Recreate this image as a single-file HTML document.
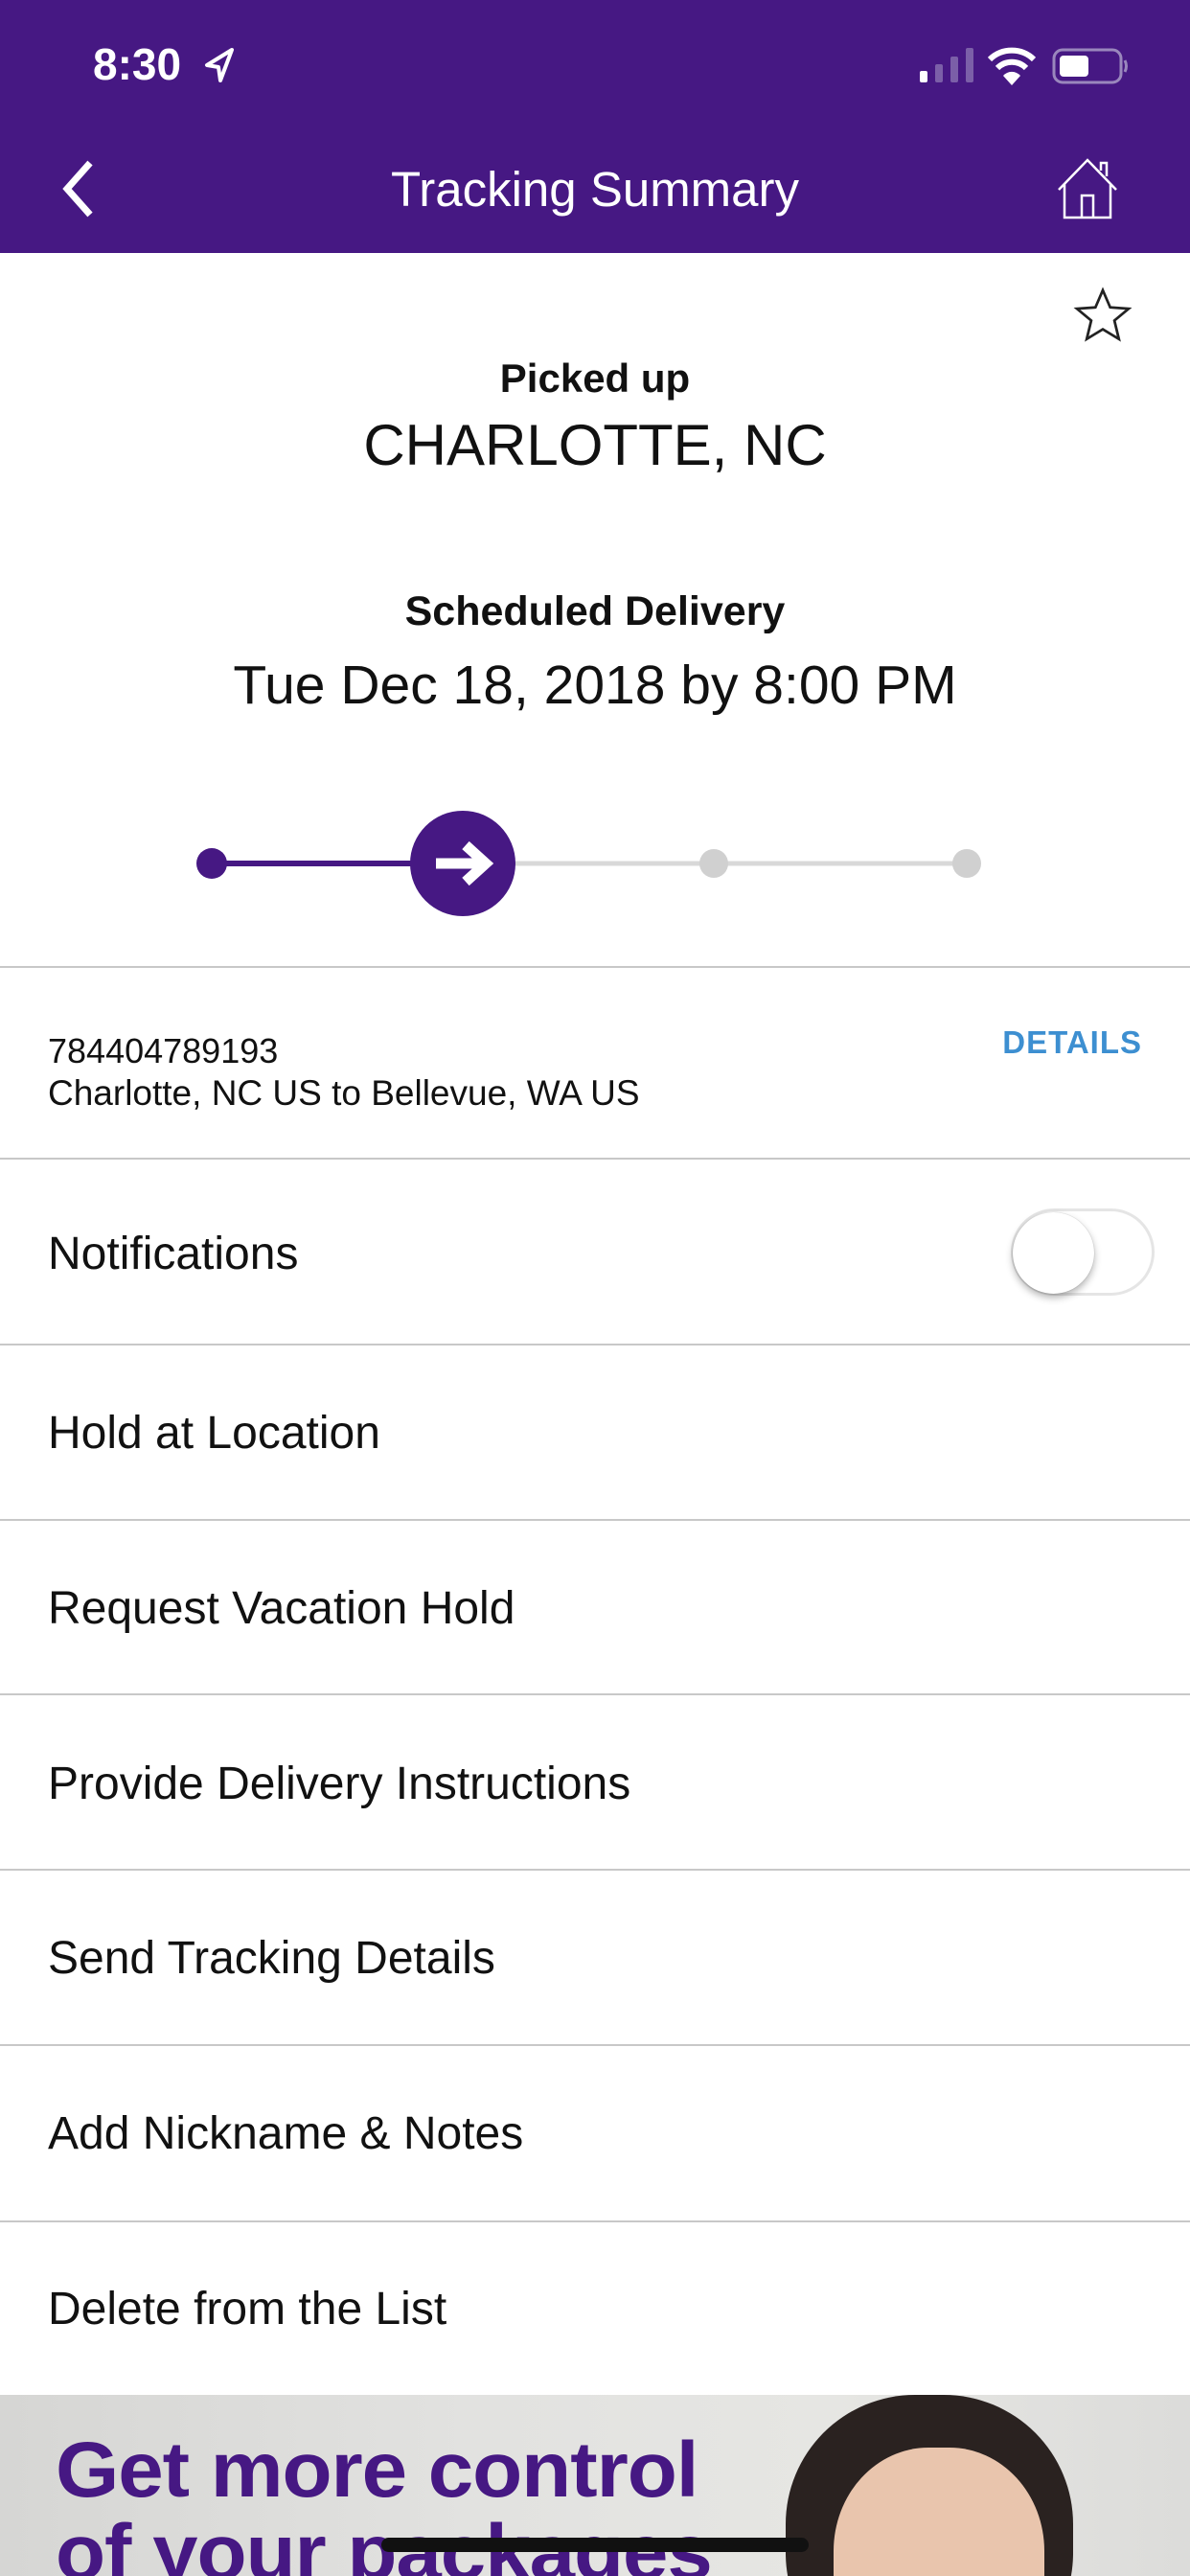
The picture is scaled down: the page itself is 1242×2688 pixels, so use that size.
<!DOCTYPE html>
<html><head><meta charset="utf-8"><style>
*{margin:0;padding:0;box-sizing:border-box}
body{width:1242px;height:2688px;overflow:hidden;background:#fff;font-family:"Liberation Sans",sans-serif;position:relative;color:#111}
.abs{position:absolute}
.hdr{left:0;top:0;width:1242px;height:264px;background:#461883}
.c{left:0;width:1242px;text-align:center}
.div{left:0;width:1242px;height:2px;background:#c8c8c8}
.row{left:50px;font-size:48px;color:#111}
</style></head><body>
<div class="abs hdr"></div>
<div class="abs" style="left:97px;top:40px;font-size:46px;font-weight:bold;color:#fff">8:30</div>
<svg class="abs" style="left:212px;top:48px" width="34" height="40" viewBox="0 0 34 40"><path d="M30 4 L4 20 L16 22 L18 36 Z" fill="none" stroke="#fff" stroke-width="4" stroke-linejoin="round"/></svg>
<svg class="abs" style="left:958px;top:50px" width="60" height="36"><rect x="2" y="24" width="8" height="12" rx="2" fill="#fff"/><rect x="18" y="17" width="8" height="19" rx="2" fill="#7b5fa8"/><rect x="34" y="9" width="8" height="27" rx="2" fill="#7b5fa8"/><rect x="50" y="0" width="8" height="36" rx="2" fill="#7b5fa8"/></svg>
<svg class="abs" style="left:1030px;top:48px" width="52" height="42" viewBox="0 0 52 42"><path d="M3 14 A33 33 0 0 1 49 14" fill="none" stroke="#fff" stroke-width="6"/><path d="M11 23 A21 21 0 0 1 41 23" fill="none" stroke="#fff" stroke-width="6"/><path d="M26 41 L17 31 A12 12 0 0 1 35 31 Z" fill="#fff"/></svg>
<svg class="abs" style="left:1098px;top:50px" width="80" height="38"><rect x="2" y="2" width="70" height="34" rx="9" fill="none" stroke="#9a87bd" stroke-width="3"/><rect x="8" y="8" width="30" height="22" rx="4" fill="#fff"/><path d="M76 13 Q79 19 76 25" stroke="#9a87bd" stroke-width="3" fill="none"/></svg>
<svg class="abs" style="left:58px;top:166px" width="44" height="62"><path d="M36 4 L12 31 L36 58" fill="none" stroke="#fff" stroke-width="7"/></svg>
<div class="abs c" style="top:168px;font-size:51px;color:#fff">Tracking Summary</div>
<svg class="abs" style="left:1102px;top:164px" width="66" height="66" viewBox="0 0 66 66"><path d="M3 34 L33 3 L63 34 M9 28 V63 H57 V28 M27 63 V40 H39 V63 M47 14 V6 H53 V20" fill="none" stroke="#fff" stroke-width="2.5"/></svg>
<svg class="abs" style="left:1118px;top:296px" width="66" height="66" viewBox="0 0 24 24"><path d="M12 2.5 L14.8 9 L21.8 9.5 L16.4 14 L18.1 21 L12 17.3 L5.9 21 L7.6 14 L2.2 9.5 L9.2 9 Z" fill="none" stroke="#222" stroke-width="1"/></svg>
<div class="abs c" style="top:371px;font-size:42px;font-weight:bold">Picked up</div>
<div class="abs c" style="top:430px;font-size:60px">CHARLOTTE, NC</div>
<div class="abs c" style="top:614px;font-size:43px;font-weight:bold">Scheduled Delivery</div>
<div class="abs c" style="top:682px;font-size:57px">Tue Dec 18, 2018 by 8:00 PM</div>
<svg class="abs" style="left:0;top:840px" width="1242" height="120"><line x1="221" y1="61" x2="483" y2="61" stroke="#461883" stroke-width="6"/><line x1="483" y1="61" x2="1009" y2="61" stroke="#d8d8d8" stroke-width="5"/><circle cx="221" cy="61" r="16" fill="#461883"/><circle cx="745" cy="61" r="15" fill="#d0d0d0"/><circle cx="1009" cy="61" r="15" fill="#d0d0d0"/><circle cx="483" cy="61" r="55" fill="#461883"/><path d="M455 61 H505 M486 42 L507 61 L486 80" stroke="#fff" stroke-width="11" fill="none" stroke-linejoin="miter"/></svg>
<div class="abs div" style="top:1008px"></div>
<div class="abs" style="left:50px;top:1076px;font-size:36px">784404789193</div>
<div class="abs" style="left:50px;top:1120px;font-size:37px">Charlotte, NC US to Bellevue, WA US</div>
<div class="abs" style="right:50px;top:1069px;font-size:33px;font-weight:bold;color:#3d8fd1;letter-spacing:1px">DETAILS</div>
<div class="abs div" style="top:1208px"></div>
<div class="abs row" style="top:1281px">Notifications</div>
<div class="abs" style="left:1055px;top:1261px;width:150px;height:91px;border-radius:46px;border:3px solid #e5e5e5;background:#fff"></div>
<div class="abs" style="left:1057px;top:1265px;width:85px;height:85px;border-radius:50%;background:#fff;box-shadow:0 4px 8px rgba(0,0,0,.3),0 0 1px rgba(0,0,0,.3)"></div>
<div class="abs div" style="top:1402px"></div>
<div class="abs row" style="top:1468px">Hold at Location</div>
<div class="abs div" style="top:1585px"></div>
<div class="abs row" style="top:1651px">Request Vacation Hold</div>
<div class="abs div" style="top:1767px"></div>
<div class="abs row" style="top:1834px">Provide Delivery Instructions</div>
<div class="abs div" style="top:1950px"></div>
<div class="abs row" style="top:2016px">Send Tracking Details</div>
<div class="abs div" style="top:2133px"></div>
<div class="abs row" style="top:2199px">Add Nickname &amp; Notes</div>
<div class="abs div" style="top:2317px"></div>
<div class="abs row" style="top:2382px">Delete from the List</div>
<div class="abs" style="left:0;top:2499px;width:1242px;height:189px;background:linear-gradient(90deg,#d6d6d4,#e2e2e0 40%,#e6e6e3 70%,#dcdcda);overflow:hidden">
<div class="abs" style="left:820px;top:0;width:300px;height:300px;border-radius:45%;background:#2a2220"></div>
<div class="abs" style="left:870px;top:55px;width:220px;height:240px;border-radius:45%;background:#e9c5ad"></div>
<div class="abs" style="left:58px;top:36px;font-size:82px;font-weight:bold;color:#461883;line-height:86px;letter-spacing:-1px;transform:scaleX(1.04);transform-origin:left">Get more control<br>of your packages</div>
</div>
<div class="abs" style="left:398px;top:2648px;width:446px;height:15px;border-radius:8px;background:#111"></div>
</body></html>
